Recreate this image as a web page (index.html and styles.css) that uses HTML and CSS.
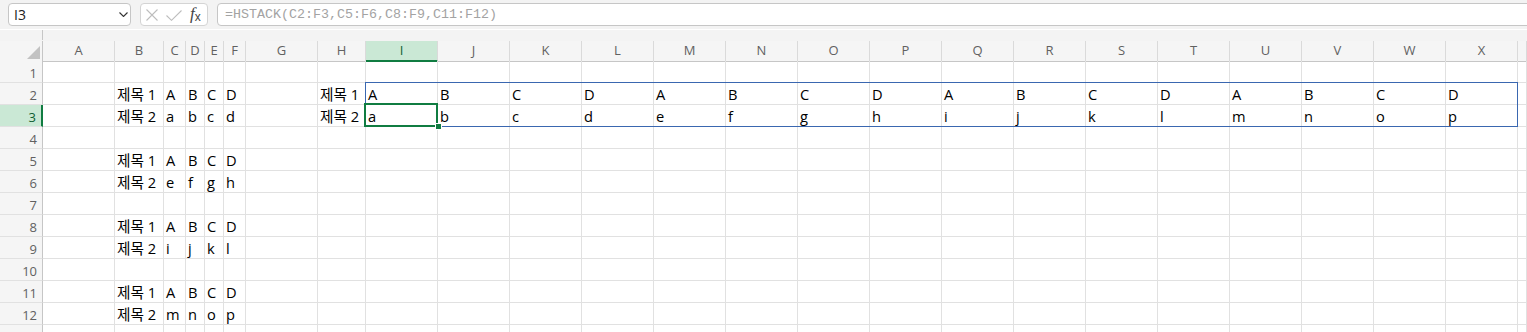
FILE: index.html
```html
<!DOCTYPE html>
<html lang="ko">
<head>
<meta charset="utf-8">
<title>HSTACK</title>
<link rel="stylesheet" href="styles.css">
</head>
<body>
<div class="toolbar">
  <div class="namebox"><span>I3</span><svg class="chev" width="9" height="5" viewBox="0 0 9 5"><path d="M0.5 0.5 L4.5 4.5 L8.5 0.5" fill="none" stroke="#333" stroke-width="1.1"/></svg></div>
  <div class="btns">
    <svg class="ico-x" width="12" height="12" viewBox="0 0 12 12"><path d="M0.5 0.5 L11.5 11.5 M11.5 0.5 L0.5 11.5" fill="none" stroke="#bdbdbd" stroke-width="1.1"/></svg>
    <svg class="ico-ok" width="16" height="11" viewBox="0 0 16 11"><path d="M0.5 5.5 L5.5 10.3 L15.5 0.5" fill="none" stroke="#bdbdbd" stroke-width="1.1"/></svg>
    <span class="fx"><i>f</i><span class="fx-x">x</span></span>
  </div>
  <div class="formula">=HSTACK(C2:F3,C5:F6,C8:F9,C11:F12)</div>
</div>
<div class="strip"><div class="strip-left"></div></div>
<div class="sheet">
  <div class="row head">
    <div class="corner"><span class="tri"></span></div>
    <div class="ch">A</div><div class="ch">B</div><div class="ch">C</div><div class="ch">D</div><div class="ch">E</div><div class="ch">F</div><div class="ch">G</div><div class="ch">H</div>
    <div class="ch sel">I</div><div class="ch">J</div><div class="ch">K</div><div class="ch">L</div><div class="ch">M</div><div class="ch">N</div><div class="ch">O</div><div class="ch">P</div>
    <div class="ch">Q</div><div class="ch">R</div><div class="ch">S</div><div class="ch">T</div><div class="ch">U</div><div class="ch">V</div><div class="ch">W</div><div class="ch">X</div><div class="ch"></div>
  </div>
  <div class="row">
    <div class="rh">1</div>
    <div class="c"></div><div class="c"></div><div class="c"></div><div class="c"></div><div class="c"></div><div class="c"></div><div class="c"></div><div class="c"></div>
    <div class="c"></div><div class="c"></div><div class="c"></div><div class="c"></div><div class="c"></div><div class="c"></div><div class="c"></div><div class="c"></div>
    <div class="c"></div><div class="c"></div><div class="c"></div><div class="c"></div><div class="c"></div><div class="c"></div><div class="c"></div><div class="c"></div><div class="c"></div>
  </div>
  <div class="row">
    <div class="rh">2</div>
    <div class="c"></div><div class="c">제목 1</div><div class="c">A</div><div class="c">B</div><div class="c">C</div><div class="c">D</div><div class="c"></div><div class="c">제목 1</div>
    <div class="c">A</div><div class="c">B</div><div class="c">C</div><div class="c">D</div><div class="c">A</div><div class="c">B</div><div class="c">C</div><div class="c">D</div>
    <div class="c">A</div><div class="c">B</div><div class="c">C</div><div class="c">D</div><div class="c">A</div><div class="c">B</div><div class="c">C</div><div class="c">D</div><div class="c"></div>
  </div>
  <div class="row">
    <div class="rh sel">3</div>
    <div class="c"></div><div class="c">제목 2</div><div class="c">a</div><div class="c">b</div><div class="c">c</div><div class="c">d</div><div class="c"></div><div class="c">제목 2</div>
    <div class="c">a</div><div class="c">b</div><div class="c">c</div><div class="c">d</div><div class="c">e</div><div class="c">f</div><div class="c">g</div><div class="c">h</div>
    <div class="c">i</div><div class="c">j</div><div class="c">k</div><div class="c">l</div><div class="c">m</div><div class="c">n</div><div class="c">o</div><div class="c">p</div><div class="c"></div>
  </div>
  <div class="row">
    <div class="rh">4</div>
    <div class="c"></div><div class="c"></div><div class="c"></div><div class="c"></div><div class="c"></div><div class="c"></div><div class="c"></div><div class="c"></div>
    <div class="c"></div><div class="c"></div><div class="c"></div><div class="c"></div><div class="c"></div><div class="c"></div><div class="c"></div><div class="c"></div>
    <div class="c"></div><div class="c"></div><div class="c"></div><div class="c"></div><div class="c"></div><div class="c"></div><div class="c"></div><div class="c"></div><div class="c"></div>
  </div>
  <div class="row">
    <div class="rh">5</div>
    <div class="c"></div><div class="c">제목 1</div><div class="c">A</div><div class="c">B</div><div class="c">C</div><div class="c">D</div><div class="c"></div><div class="c"></div>
    <div class="c"></div><div class="c"></div><div class="c"></div><div class="c"></div><div class="c"></div><div class="c"></div><div class="c"></div><div class="c"></div>
    <div class="c"></div><div class="c"></div><div class="c"></div><div class="c"></div><div class="c"></div><div class="c"></div><div class="c"></div><div class="c"></div><div class="c"></div>
  </div>
  <div class="row">
    <div class="rh">6</div>
    <div class="c"></div><div class="c">제목 2</div><div class="c">e</div><div class="c">f</div><div class="c">g</div><div class="c">h</div><div class="c"></div><div class="c"></div>
    <div class="c"></div><div class="c"></div><div class="c"></div><div class="c"></div><div class="c"></div><div class="c"></div><div class="c"></div><div class="c"></div>
    <div class="c"></div><div class="c"></div><div class="c"></div><div class="c"></div><div class="c"></div><div class="c"></div><div class="c"></div><div class="c"></div><div class="c"></div>
  </div>
  <div class="row">
    <div class="rh">7</div>
    <div class="c"></div><div class="c"></div><div class="c"></div><div class="c"></div><div class="c"></div><div class="c"></div><div class="c"></div><div class="c"></div>
    <div class="c"></div><div class="c"></div><div class="c"></div><div class="c"></div><div class="c"></div><div class="c"></div><div class="c"></div><div class="c"></div>
    <div class="c"></div><div class="c"></div><div class="c"></div><div class="c"></div><div class="c"></div><div class="c"></div><div class="c"></div><div class="c"></div><div class="c"></div>
  </div>
  <div class="row">
    <div class="rh">8</div>
    <div class="c"></div><div class="c">제목 1</div><div class="c">A</div><div class="c">B</div><div class="c">C</div><div class="c">D</div><div class="c"></div><div class="c"></div>
    <div class="c"></div><div class="c"></div><div class="c"></div><div class="c"></div><div class="c"></div><div class="c"></div><div class="c"></div><div class="c"></div>
    <div class="c"></div><div class="c"></div><div class="c"></div><div class="c"></div><div class="c"></div><div class="c"></div><div class="c"></div><div class="c"></div><div class="c"></div>
  </div>
  <div class="row">
    <div class="rh">9</div>
    <div class="c"></div><div class="c">제목 2</div><div class="c">i</div><div class="c">j</div><div class="c">k</div><div class="c">l</div><div class="c"></div><div class="c"></div>
    <div class="c"></div><div class="c"></div><div class="c"></div><div class="c"></div><div class="c"></div><div class="c"></div><div class="c"></div><div class="c"></div>
    <div class="c"></div><div class="c"></div><div class="c"></div><div class="c"></div><div class="c"></div><div class="c"></div><div class="c"></div><div class="c"></div><div class="c"></div>
  </div>
  <div class="row">
    <div class="rh">10</div>
    <div class="c"></div><div class="c"></div><div class="c"></div><div class="c"></div><div class="c"></div><div class="c"></div><div class="c"></div><div class="c"></div>
    <div class="c"></div><div class="c"></div><div class="c"></div><div class="c"></div><div class="c"></div><div class="c"></div><div class="c"></div><div class="c"></div>
    <div class="c"></div><div class="c"></div><div class="c"></div><div class="c"></div><div class="c"></div><div class="c"></div><div class="c"></div><div class="c"></div><div class="c"></div>
  </div>
  <div class="row">
    <div class="rh">11</div>
    <div class="c"></div><div class="c">제목 1</div><div class="c">A</div><div class="c">B</div><div class="c">C</div><div class="c">D</div><div class="c"></div><div class="c"></div>
    <div class="c"></div><div class="c"></div><div class="c"></div><div class="c"></div><div class="c"></div><div class="c"></div><div class="c"></div><div class="c"></div>
    <div class="c"></div><div class="c"></div><div class="c"></div><div class="c"></div><div class="c"></div><div class="c"></div><div class="c"></div><div class="c"></div><div class="c"></div>
  </div>
  <div class="row">
    <div class="rh">12</div>
    <div class="c"></div><div class="c">제목 2</div><div class="c">m</div><div class="c">n</div><div class="c">o</div><div class="c">p</div><div class="c"></div><div class="c"></div>
    <div class="c"></div><div class="c"></div><div class="c"></div><div class="c"></div><div class="c"></div><div class="c"></div><div class="c"></div><div class="c"></div>
    <div class="c"></div><div class="c"></div><div class="c"></div><div class="c"></div><div class="c"></div><div class="c"></div><div class="c"></div><div class="c"></div><div class="c"></div>
  </div>
  <div class="row">
    <div class="rh">13</div>
    <div class="c"></div><div class="c"></div><div class="c"></div><div class="c"></div><div class="c"></div><div class="c"></div><div class="c"></div><div class="c"></div>
    <div class="c"></div><div class="c"></div><div class="c"></div><div class="c"></div><div class="c"></div><div class="c"></div><div class="c"></div><div class="c"></div>
    <div class="c"></div><div class="c"></div><div class="c"></div><div class="c"></div><div class="c"></div><div class="c"></div><div class="c"></div><div class="c"></div><div class="c"></div>
  </div>
  <div class="spill"></div>
  <div class="cursor"><span class="handle"></span></div>
</div>
</body>
</html>
```
FILE: styles.css
```css
* { box-sizing: border-box; }
html, body {
  margin: 0;
  padding: 0;
  width: 1527px;
  height: 332px;
  overflow: hidden;
  background: #fff;
}
body {
  font-family: "Open Sans", "Noto Sans CJK KR", sans-serif;
}

/* formula bar */
.toolbar {
  display: flex;
  align-items: flex-start;
  height: 29px;
  padding: 3px 0 0 8px;
  background: #f3f3f3;
}
.namebox {
  width: 123px;
  height: 23px;
  margin-right: 9px;
  background: #fff;
  border: 1px solid #c6c6c6;
  border-radius: 4px;
  display: flex;
  align-items: center;
  justify-content: space-between;
  padding: 0 2px 0 5px;
  font-size: 14px;
  color: #222;
}
.chev { display: block; }
.btns {
  width: 68px;
  height: 23px;
  margin-right: 9px;
  background: #fff;
  border: 1px solid #d4d4d4;
  border-radius: 4px;
  display: flex;
  align-items: center;
  padding-left: 5px;
}
.ico-x { display: block; margin-top: 1px; }
.ico-ok { display: block; margin-left: 8px; margin-top: 1px; }
.fx {
  margin-left: 8px;
  color: #444;
  display: flex;
  align-items: baseline;
  line-height: 20px;
}
.fx i {
  font-family: "Liberation Serif", serif;
  font-style: italic;
  font-size: 17px;
}
.fx-x {
  font-family: "Liberation Sans", sans-serif;
  font-size: 12px;
  position: relative;
  top: 2px;
  margin-left: 0;
}
.formula {
  flex: 1;
  height: 23px;
  margin-right: -10px;
  background: #fff;
  border: 1px solid #c6c6c6;
  border-radius: 4px;
  padding-left: 7px;
  font-family: "Liberation Mono", monospace;
  font-size: 13.33px;
  line-height: 21px;
  color: #a3a3a3;
  white-space: nowrap;
}
.strip {
  height: 11px;
  background: #f3f3f3;
}
.strip-left {
  width: 43px;
  height: 10px;
  margin-top: 1px;
  border-right: 1px solid #c6c6c6;
}

/* sheet */
.sheet {
  position: relative;
}
.row {
  display: grid;
  grid-template-columns: 43px 72px 49px 22px 19px 19px 22px 72px 48px repeat(16, 72px) 1fr;
  height: 22px;
}
.row.head { height: 20px; }

.corner {
  background: #f5f5f5;
  border-right: 1px solid #c6c6c6;
  border-bottom: 1px solid #c6c6c6;
  display: flex;
  align-items: flex-end;
  justify-content: flex-end;
  padding: 0 2px 2px 0;
}
.tri {
  width: 13px;
  height: 13px;
  background: #c2c2c2;
  clip-path: polygon(100% 0, 100% 100%, 0 100%);
}
.ch {
  background: #f5f5f5;
  border-right: 1px solid #dadada;
  border-bottom: 1px solid #c6c6c6;
  font-size: 13px;
  line-height: 19px;
  color: #616161;
  text-align: center;
}
.ch.sel {
  background: #cae8d5;
  border-bottom: 2px solid #107c41;
  color: #0f5f33;
}
.rh {
  background: #f5f5f5;
  border-right: 1px solid #c6c6c6;
  border-bottom: 1px solid #e1e1e1;
  font-size: 13px;
  line-height: 17px;
  color: #616161;
  display: flex;
  align-items: flex-end;
  justify-content: flex-end;
  padding-right: 5px;
}
.rh.sel {
  background: #cae8d5;
  border-right: 2px solid #107c41;
  color: #0f5f33;
}
.c {
  border-right: 1px solid #e1e1e1;
  border-bottom: 1px solid #e1e1e1;
  font-size: 14.67px;
  line-height: 20px;
  padding-left: 2px;
  white-space: nowrap;
  display: flex;
  align-items: flex-end;
  color: #000;
}

/* overlays */
.spill {
  position: absolute;
  left: 365px;
  top: 41px;
  width: 1153px;
  height: 45px;
  border: 1px solid #3a67b0;
  pointer-events: none;
}
.cursor {
  position: absolute;
  left: 364px;
  top: 62px;
  width: 74px;
  height: 24px;
  border: 2px solid #107c41;
  pointer-events: none;
}
.handle {
  position: absolute;
  left: 69px;
  top: 18px;
  width: 7px;
  height: 7px;
  background: #107c41;
  border: 1px solid #fff;
}
```
